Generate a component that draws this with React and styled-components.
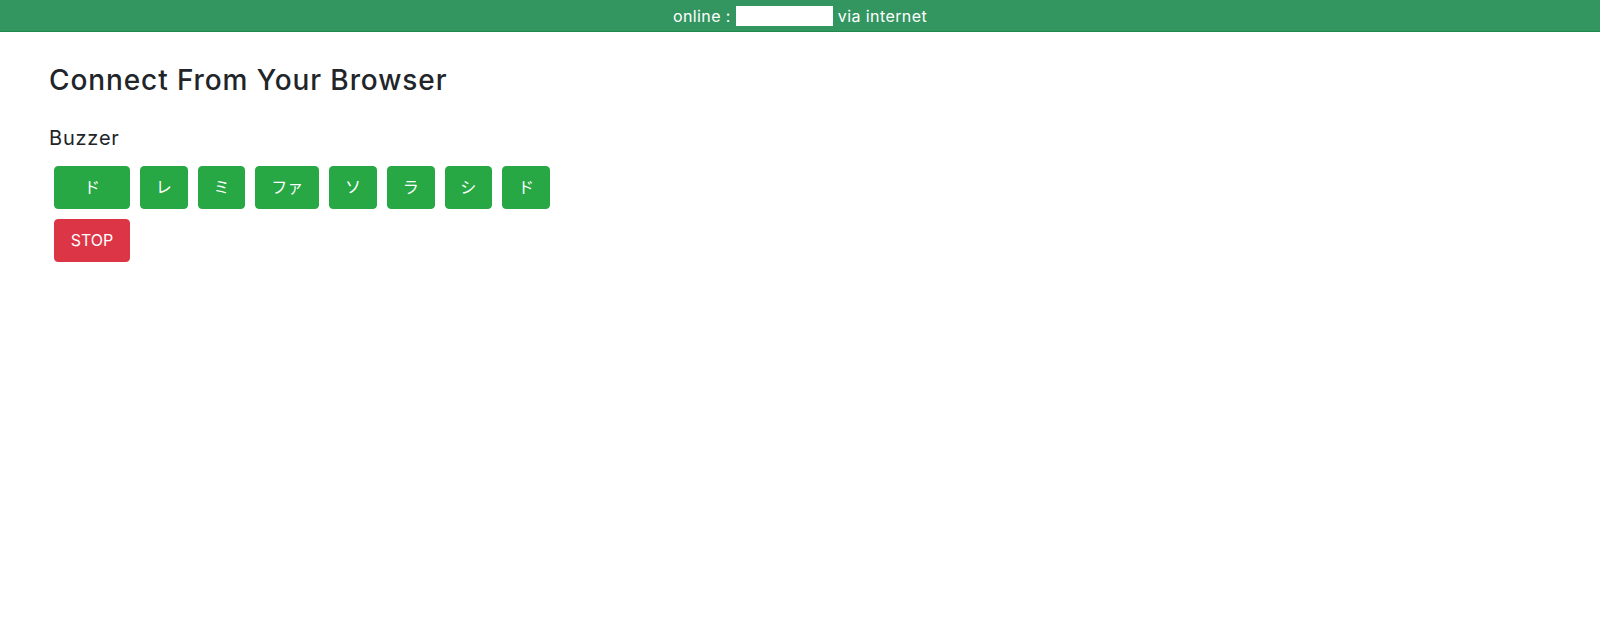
import React from 'react';
import styled, { createGlobalStyle } from 'styled-components';

const GlobalStyle = createGlobalStyle`
    body {
        margin: 0;
        background: #ffffff;
        color: #212529;
        font-family: Inter, "Noto Sans CJK JP", sans-serif;
    }
`

const StatusBar = styled.header`
    height: 31px;
    background: #339660;
    border-bottom: 1px solid #1e8a4c;
    color: #ffffff;
    font-size: 16px;
    letter-spacing: 0.4px;
    display: flex;
    align-items: center;
    justify-content: center;
    gap: 5px;
`

const Masked = styled.span`
    display: inline-block;
    width: 97px;
    height: 20px;
    background: #ffffff;
`

const Page = styled.main`
    padding: 32px 49px 0;
`

const Title = styled.h3`
    margin: 0;
    font-size: 28px;
    font-weight: 500;
    line-height: 1.2;
    letter-spacing: 0.9px;
`

const Section = styled.h5`
    margin: 28px 0 0;
    font-size: 20px;
    font-weight: 400;
    line-height: 1.2;
    letter-spacing: 0.8px;
`

const Controls = styled.div`
    margin-top: 16px;
    padding-left: 5px;
    display: flex;
    flex-direction: column;
    gap: 10px;
`

const Row = styled.div`
    display: flex;
    gap: 10px;
`

const Button = styled.button`
    height: 43px;
    width: ${p => (p.$wide ? '76px' : 'auto')};
    padding: 0 14.85px;
    border: 1px solid ${p => (p.$danger ? '#dc3545' : '#28a745')};
    border-radius: 4px;
    background: ${p => (p.$danger ? '#dc3545' : '#28a745')};
    color: #ffffff;
    font-family: Inter, "Noto Sans CJK JP", sans-serif;
    font-size: 16px;
    line-height: 24px;
    cursor: pointer;
`

const notes = ['ド', 'レ', 'ミ', 'ファ', 'ソ', 'ラ', 'シ', 'ド']

const App = () => {
    return (
        <>
            <GlobalStyle />
            <StatusBar>
                online : <Masked /> via internet
            </StatusBar>
            <Page>
                <Title>Connect From Your Browser</Title>
                <Section>Buzzer</Section>
                <Controls>
                    <Row>
                        {notes.map((note, i) => (
                            <Button key={i} $wide={i === 0}>{note}</Button>
                        ))}
                    </Row>
                    <Row>
                        <Button $wide $danger>STOP</Button>
                    </Row>
                </Controls>
            </Page>
        </>
    )
}

export default App;
